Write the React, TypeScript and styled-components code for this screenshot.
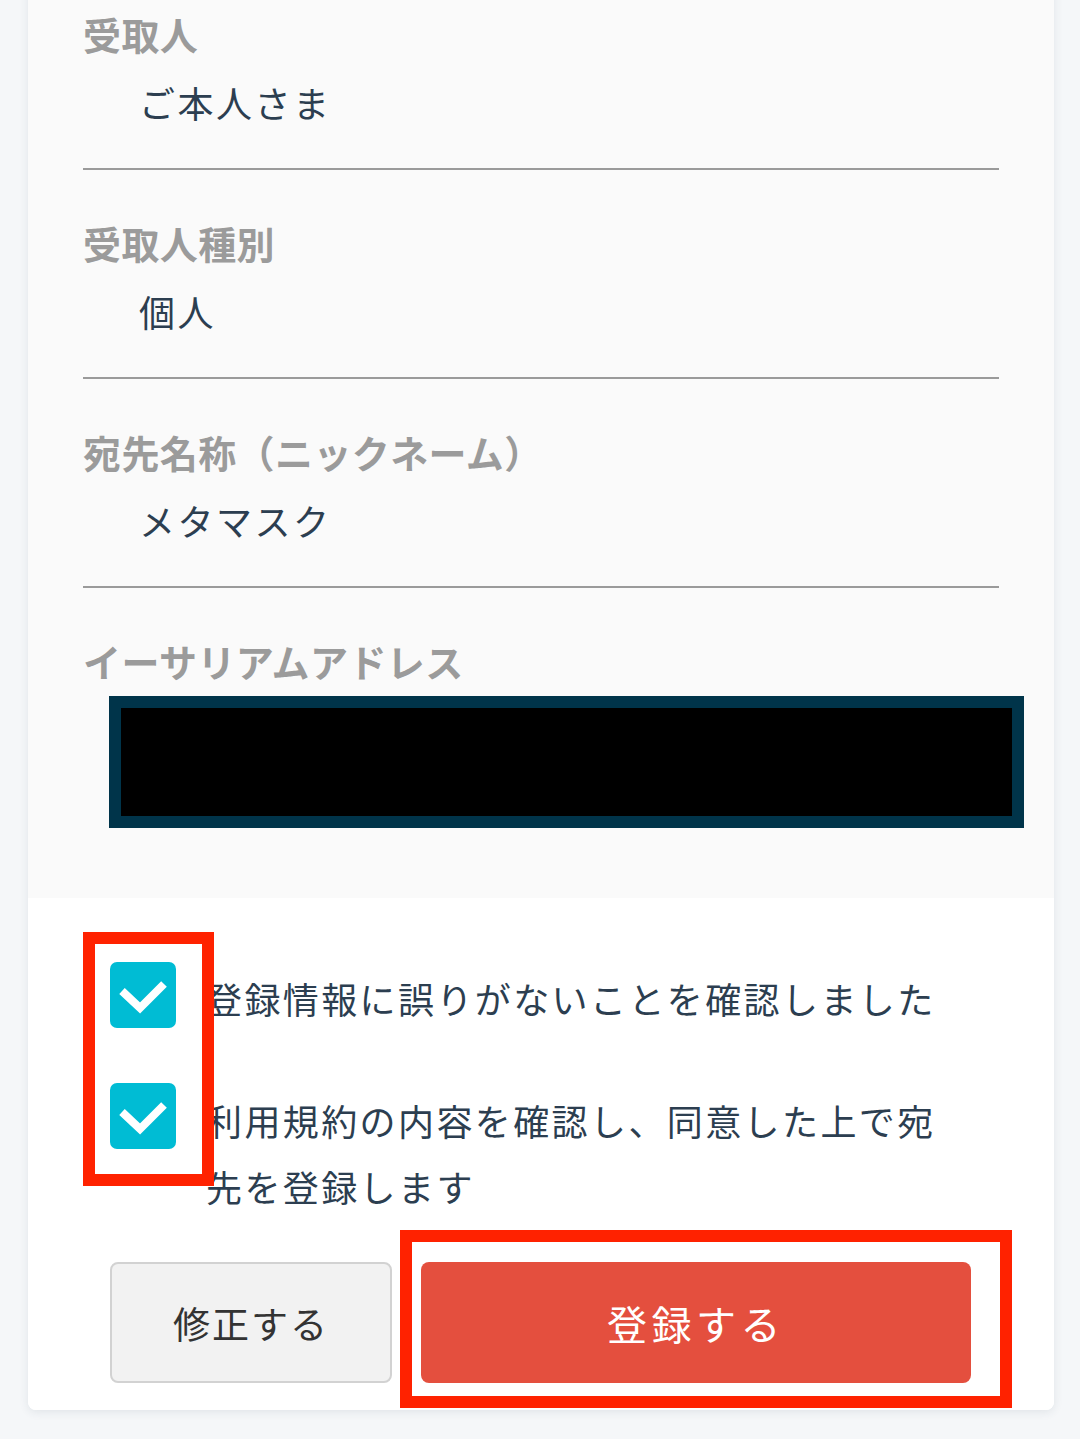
import React from "react";
import styled, { createGlobalStyle } from "styled-components";

const GlobalStyle = createGlobalStyle`
  html, body {
    margin: 0;
    padding: 0;
    background: #f5f7f9;
  }
  body {
    font-family: "Noto Sans CJK JP", "Noto Sans", sans-serif;
    -webkit-font-smoothing: antialiased;
  }
  * { box-sizing: border-box; }
`;

const Page = styled.div`
  padding: 0 26px 30px 28px;
  overflow: hidden;
`;

const Card = styled.div`
  margin-top: -39px;
  background: #ffffff;
  border-radius: 8px;
  box-shadow: 0 2px 10px rgba(40, 60, 80, 0.1);
  overflow: hidden;
`;

const InfoPanel = styled.div`
  background: #fafafa;
  padding: 0 55px 70px;
`;

const Field = styled.div<{ $last?: boolean }>`
  padding-top: 48px;
  padding-bottom: ${(p) => (p.$last ? "0" : "41px")};
  border-bottom: ${(p) => (p.$last ? "none" : "2px solid #9a9a9a")};
`;

const Label = styled.div`
  font-size: 38px;
  line-height: 50px;
  font-weight: 700;
  letter-spacing: 0.4px;
  color: #9b9b9b;
  white-space: nowrap;
`;

const Value = styled.div`
  margin-top: 18px;
  padding-left: 56px;
  font-size: 36px;
  line-height: 50px;
  letter-spacing: 2.5px;
  color: #2c3e50;
`;

const Redacted = styled.div`
  margin: 10px -25px 0 26px;
  height: 132px;
  border: 12px solid #00344a;
  background: #000000;
`;

const ConsentPanel = styled.div`
  position: relative;
  background: #ffffff;
  padding: 67px 83px 27px 82px;
`;

const CheckRow = styled.div<{ $gap?: number }>`
  display: flex;
  align-items: flex-start;
  gap: 30px;
  margin-top: ${(p) => p.$gap ?? 0}px;
`;

const CheckBox = styled.div<{ $shift: number }>`
  flex: none;
  width: 66px;
  height: 66px;
  margin-top: ${(p) => p.$shift}px;
  border-radius: 7px;
  background: #00bcd4;
  display: flex;
  align-items: center;
  justify-content: center;
`;

const CheckText = styled.div`
  width: 745px;
  font-size: 36px;
  letter-spacing: 2.4px;
  line-height: 66px;
  color: #2c3e50;
`;

const ButtonRow = styled.div`
  display: flex;
  gap: 29px;
  margin-top: 43px;
`;

const Button = styled.button<{ $primary?: boolean }>`
  height: 121px;
  border-radius: 8px;
  font-family: "Noto Sans CJK JP", "Noto Sans", sans-serif;
  cursor: pointer;
  display: flex;
  align-items: center;
  justify-content: center;
  ${(p) =>
    p.$primary
      ? `
    flex: 1;
    background: #e44f3e;
    border: none;
    color: #ffffff;
    font-size: 40px;
    letter-spacing: 4.5px;
  `
      : `
    flex: none;
    width: 282px;
    background: #f2f2f2;
    border: 2px solid #d2d2d2;
    color: #333333;
    font-size: 37px;
    letter-spacing: 2px;
  `}
`;

const Annotation = styled.div<{ $l: number; $t: number; $w: number; $h: number }>`
  position: absolute;
  left: ${(p) => p.$l}px;
  top: ${(p) => p.$t}px;
  width: ${(p) => p.$w}px;
  height: ${(p) => p.$h}px;
  border: 12px solid #ff2200;
  pointer-events: none;
`;

const Check = () => (
  <svg width="66" height="66" viewBox="0 0 66 66">
    <polyline
      points="12,29 30,46 54,22"
      fill="none"
      stroke="#ffffff"
      strokeWidth="8"
      strokeLinejoin="miter"
    />
  </svg>
);

export default function App() {
  return (
    <>
      <GlobalStyle />
      <Page>
        <Card>
          <InfoPanel>
            <Field>
              <Label>受取人</Label>
              <Value>ご本人さま</Value>
            </Field>
            <Field>
              <Label>受取人種別</Label>
              <Value>個人</Value>
            </Field>
            <Field>
              <Label>宛先名称（ニックネーム）</Label>
              <Value>メタマスク</Value>
            </Field>
            <Field $last>
              <Label>イーサリアムアドレス</Label>
              <Redacted />
            </Field>
          </InfoPanel>
          <ConsentPanel>
            <CheckRow>
              <CheckBox $shift={-3}>
                <Check />
              </CheckBox>
              <CheckText>登録情報に誤りがないことを確認しました</CheckText>
            </CheckRow>
            <CheckRow $gap={56}>
              <CheckBox $shift={-4}>
                <Check />
              </CheckBox>
              <CheckText>利用規約の内容を確認し、同意した上で宛先を登録します</CheckText>
            </CheckRow>
            <ButtonRow>
              <Button>修正する</Button>
              <Button $primary>登録する</Button>
            </ButtonRow>
            <Annotation $l={55} $t={34} $w={131} $h={254} />
            <Annotation $l={372} $t={332} $w={612} $h={178} />
          </ConsentPanel>
        </Card>
      </Page>
    </>
  );
}
